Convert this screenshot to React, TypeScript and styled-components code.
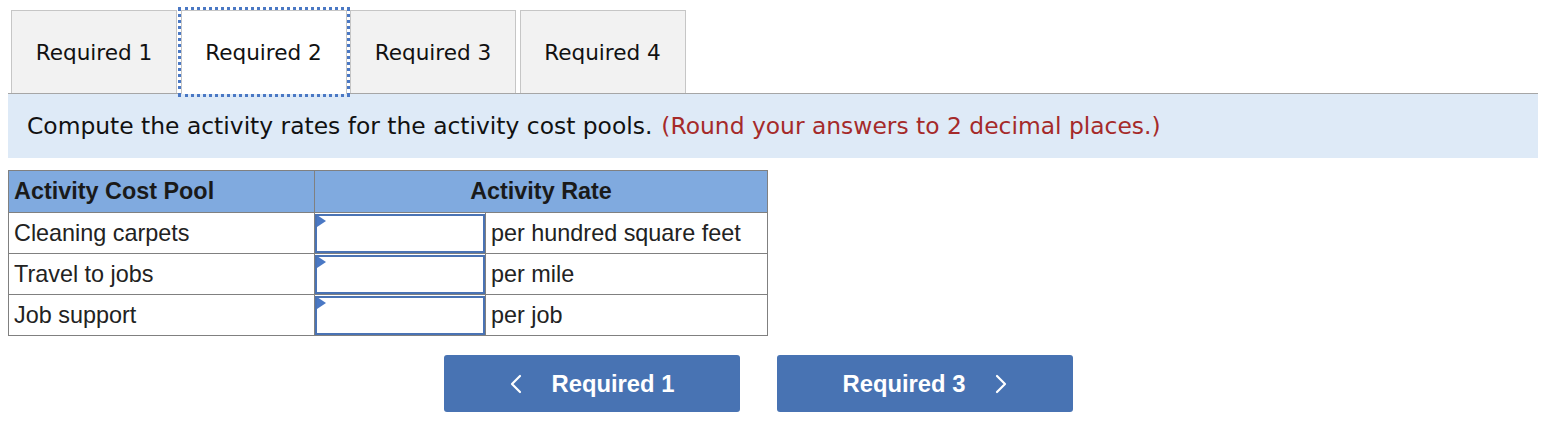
import styled, {createGlobalStyle, css} from "styled-components";
import {useState} from "react";

const GlobalStyle = createGlobalStyle`
  body {
    margin: 0;
    background: #ffffff;
  }
`

const Page = styled.div`
  padding: 0 16px 0 8px;
`

const TabBar = styled.div`
  display: flex;
  gap: 3.5px;
  padding: 10px 0 0 3px;
  border-bottom: 1px solid #a6a6a6;
`

const Tab = styled.div<{ active: boolean }>`
  width: 166px;
  height: 83px;
  box-sizing: border-box;
  display: flex;
  align-items: center;
  justify-content: center;
  border: 1px solid #c6c6c6;
  border-bottom: none;
  background-color: #f2f2f2;
  font-family: "DejaVu Sans", Verdana, sans-serif;
  font-size: 21.6px;
  color: #111;
  cursor: pointer;
  user-select: none;

  ${({active}) => active && css`
    background-color: #ffffff;
    height: 84px;
    padding-bottom: 1px;
    margin-bottom: -1px;
    outline: 3px dotted #4a78c4;
    outline-offset: 0;
  `}
`

const Instruction = styled.div`
  height: 64px;
  display: flex;
  align-items: center;
  padding-left: 19px;
  background-color: #deeaf7;
  font-family: "DejaVu Sans", Verdana, sans-serif;
  font-size: 23.4px;
  color: #111;
`

const Hint = styled.span`
  color: #a52a2a;
  margin-left: 9px;
`

const Table = styled.table`
  margin-top: 12px;
  width: 760px;
  border-collapse: collapse;
  font-family: "Liberation Sans", Arial, sans-serif;
  font-size: 23.4px;
  color: #222;
`

const HeadCell = styled.th<{ center?: boolean }>`
  height: 41px;
  padding: 0 5px;
  background-color: #80aadf;
  border: 1px solid #808080;
  text-align: ${({center}) => center ? 'center' : 'left'};
  font-weight: bold;
  color: #1a1a1a;
`

const Cell = styled.td<{ w?: number }>`
  height: 40px;
  padding: 0 5px;
  border: 1px solid #808080;
  white-space: nowrap;
  ${({w}) => w && css`width: ${w}px;`}
`

const InputCell = styled.td`
  width: 170px;
  height: 40px;
  padding: 0;
  border: 1px solid #808080;
  position: relative;
`

const RateInput = styled.input`
  display: block;
  box-sizing: border-box;
  width: 170px;
  height: 39px;
  margin: 0;
  border: 2px solid #4a73b4;
  background: #fff;
  font-family: "Liberation Sans", Arial, sans-serif;
  font-size: 20px;
  text-align: right;
  padding: 0 6px;
  outline: none;
`

const Marker = styled.span`
  position: absolute;
  left: 2px;
  top: 2px;
  width: 0;
  height: 0;
  border-top: 6px solid transparent;
  border-bottom: 6px solid transparent;
  border-left: 9px solid #4a78c4;
`

const NavRow = styled.div`
  display: flex;
  gap: 37px;
  margin-top: 19px;
  padding-left: 436px;
`

const NavButton = styled.button`
  width: 296px;
  height: 57px;
  display: flex;
  align-items: center;
  justify-content: center;
  gap: 30px;
  border: none;
  border-radius: 3px;
  background-color: #4873b3;
  color: #ffffff;
  font-family: "Liberation Sans", Arial, sans-serif;
  font-size: 23.8px;
  font-weight: bold;
  cursor: pointer;
`

const Chevron = ({dir}: { dir: 'left' | 'right' }) => (
  <svg width="12" height="20" viewBox="0 0 12 20" fill="none">
    <polyline
      points={dir === 'left' ? "10,2 2,10 10,18" : "2,2 10,10 2,18"}
      stroke="#ffffff"
      strokeWidth="2.2"
      strokeLinecap="round"
      strokeLinejoin="round"
    />
  </svg>
)

const rows = [
  {pool: 'Cleaning carpets', unit: 'per hundred square feet'},
  {pool: 'Travel to jobs', unit: 'per mile'},
  {pool: 'Job support', unit: 'per job'},
]

export default function App(): JSX.Element {
  const [active, setActive] = useState<number>(2);

  return (
    <>
      <GlobalStyle/>
      <Page>
        <TabBar>
          {[1, 2, 3, 4].map(n =>
            <Tab key={n} active={active === n} onClick={() => setActive(n)}>
              Required {n}
            </Tab>
          )}
        </TabBar>
        <Instruction>
          Compute the activity rates for the activity cost pools.
          <Hint>(Round your answers to 2 decimal places.)</Hint>
        </Instruction>
        <Table>
          <thead>
          <tr>
            <HeadCell>Activity Cost Pool</HeadCell>
            <HeadCell center colSpan={2}>Activity Rate</HeadCell>
          </tr>
          </thead>
          <tbody>
          {rows.map(row =>
            <tr key={row.pool}>
              <Cell w={295}>{row.pool}</Cell>
              <InputCell>
                <RateInput type="text"/>
                <Marker/>
              </InputCell>
              <Cell>{row.unit}</Cell>
            </tr>
          )}
          </tbody>
        </Table>
        <NavRow>
          <NavButton>
            <Chevron dir="left"/>
            Required 1
          </NavButton>
          <NavButton>
            Required 3
            <Chevron dir="right"/>
          </NavButton>
        </NavRow>
      </Page>
    </>
  )
}
